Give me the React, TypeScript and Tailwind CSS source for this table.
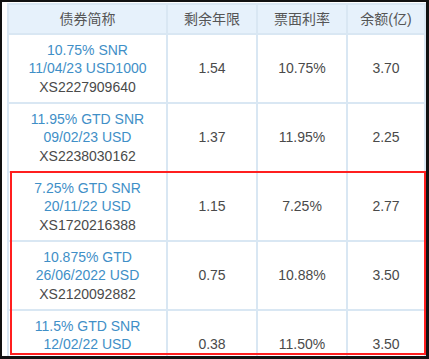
import React from "react"

type Bond = {
  name: [string, string]
  code: string
  years: string
  coupon: string
  amount: string
}

const bonds: Bond[] = [
  { name: ["10.75% SNR", "11/04/23 USD1000"], code: "XS2227909640", years: "1.54", coupon: "10.75%", amount: "3.70" },
  { name: ["11.95% GTD SNR", "09/02/23 USD"], code: "XS2238030162", years: "1.37", coupon: "11.95%", amount: "2.25" },
  { name: ["7.25% GTD SNR", "20/11/22 USD"], code: "XS1720216388", years: "1.15", coupon: "7.25%", amount: "2.77" },
  { name: ["10.875% GTD", "26/06/2022 USD"], code: "XS2120092882", years: "0.75", coupon: "10.88%", amount: "3.50" },
  { name: ["11.5% GTD SNR", "12/02/22 USD"], code: "XS2202532013", years: "0.38", coupon: "11.50%", amount: "3.50" },
]

const headers = ["债券简称", "剩余年限", "票面利率", "余额(亿)"]

export default function App() {
  return (
    <div
      className="w-[429px] h-[359px] bg-[#111] pt-[2px] pl-[2px] pr-[3px] pb-[3px]"
      style={{ fontFamily: '"Liberation Sans", "Noto Sans CJK SC", sans-serif' }}
    >
      <div className="relative h-full w-full overflow-hidden bg-white pl-[5px] pt-[1px]">
        {/* Table */}
        <div className="grid w-[419px] grid-cols-[157px_88px_88px_76px] gap-[2px] bg-[#d9e7f3] p-[2px] text-[14px]">
          {headers.map((h) => (
            <div key={h} className="flex h-[28px] items-center justify-center bg-[#e6f1fb] text-[#555]">
              {h}
            </div>
          ))}
          {bonds.map((b) => (
            <React.Fragment key={b.code}>
              <div className="flex h-[67px] flex-col items-center justify-center bg-white leading-[18.5px]">
                <span className="text-[#3f8fc7]">{b.name[0]}</span>
                <span className="text-[#3f8fc7]">{b.name[1]}</span>
                <span className="text-[#4a4a4a]">{b.code}</span>
              </div>
              <div className="flex h-[67px] items-center justify-center bg-white text-[#4a4a4a]">{b.years}</div>
              <div className="flex h-[67px] items-center justify-center bg-white text-[#4a4a4a]">{b.coupon}</div>
              <div className="flex h-[67px] items-center justify-center bg-white text-[#4a4a4a]">{b.amount}</div>
            </React.Fragment>
          ))}
        </div>

        {/* Red highlight box */}
        <div className="pointer-events-none absolute left-[8px] top-[169px] h-[184px] w-[416px] border-2 border-[#ff1f1f]" />
      </div>
    </div>
  )
}
